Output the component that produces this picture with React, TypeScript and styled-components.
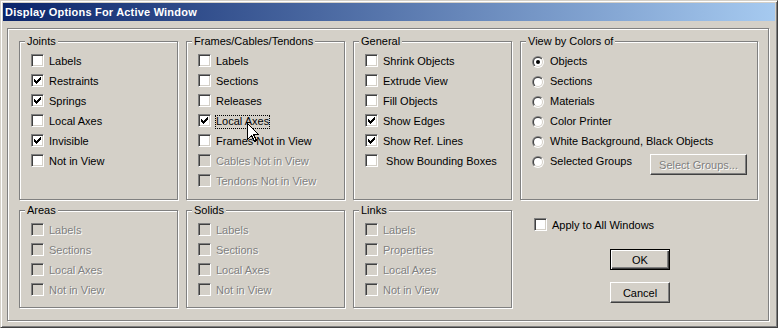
import React, { useId } from "react";
import styled, { createGlobalStyle, css } from "styled-components";

const Global = createGlobalStyle`
  html, body { margin: 0; padding: 0; background: #D4D0C8; }
  body { font-family: "Liberation Sans", Arial, sans-serif; font-size: 11px; color: #000; }
`;

const Window = styled.div`
  position: relative;
  box-sizing: border-box;
  width: 778px;
  height: 328px;
  background: #d4d0c8;
  border: 1px solid;
  border-color: #d4d0c8 #404040 #404040 #d4d0c8;
  box-shadow: inset 1px 1px 0 #fff, inset -1px -1px 0 #808080;
  padding: 2px;
  display: flex;
  flex-direction: column;
  overflow: hidden;
`;

const TitleBar = styled.div`
  flex: none;
  height: 18px;
  background: linear-gradient(to right, #0a246a, #a6caf0);
  color: #fff;
  font-weight: bold;
  font-size: 11px;
  letter-spacing: 0.2px;
  line-height: 18px;
  padding-left: 2px;
  white-space: nowrap;
`;

const OuterFrame = styled.div`
  box-sizing: border-box;
  margin: 7px 0 0 4px;
  width: 762px;
  height: 293px;
  border: 1px solid #808080;
  box-shadow: inset 1px 1px 0 #fff, 1px 1px 0 #fff;
  padding: 12px 0 0 11px;
  display: flex;
  gap: 8px;
`;

const GroupGrid = styled.div`
  display: grid;
  grid-template-columns: repeat(3, 159px);
  grid-template-rows: 159px 98px;
  column-gap: 8px;
  row-gap: 10px;
`;

const RightColumn = styled.div`
  width: 238px;
  display: flex;
  flex-direction: column;
  align-items: flex-start;
`;

const GroupBox = styled.div<{ $height?: number }>`
  position: relative;
  box-sizing: border-box;
  border: 1px solid #808080;
  box-shadow: inset 1px 1px 0 #fff, 1px 1px 0 #fff;
  padding: 9px 10px 0 11px;
  display: flex;
  flex-direction: column;
  ${(p) =>
    p.$height &&
    css`
      height: ${p.$height}px;
      width: 100%;
    `}
`;

const Legend = styled.span`
  position: absolute;
  top: -7px;
  left: 5px;
  padding: 0 2px;
  background: #d4d0c8;
  line-height: 13px;
  white-space: nowrap;
`;

const Row = styled.div`
  flex: none;
  height: 20px;
  display: flex;
  align-items: flex-start;
`;

const ApplyRow = styled(Row)`
  margin: 15px 0 0 14px;
`;

const CheckSquare = styled.span<{ $disabled?: boolean }>`
  display: block;
  flex: none;
  box-sizing: border-box;
  width: 13px;
  height: 13px;
  margin-top: 3px;
  border: 1px solid;
  border-color: #808080 #fff #fff #808080;
  box-shadow: inset 1px 1px 0 #404040, inset -1px -1px 0 #d4d0c8;
  background: ${(p) => (p.$disabled ? "#d4d0c8" : "#fff")};
`;

const CheckGlyph = styled.svg`
  display: block;
  margin: 2px;
`;

const RadioGlyph = styled.svg`
  display: block;
  flex: none;
  margin-top: 5px;
`;

const Label = styled.span<{ $disabled?: boolean; $focused?: boolean; $gap: number }>`
  margin: 4px 0 0 ${(p) => p.$gap}px;
  line-height: 11px;
  padding-bottom: 1px;
  border: 1px ${(p) => (p.$focused ? "dotted #000" : "solid transparent")};
  white-space: pre;
  color: ${(p) => (p.$disabled ? "#808080" : "#000")};
  text-shadow: ${(p) => (p.$disabled ? "1px 1px 0 #fff" : "none")};
`;

const PushButton = styled.button<{ $default?: boolean; $w: number; $disabled?: boolean }>`
  box-sizing: border-box;
  flex: none;
  width: ${(p) => p.$w}px;
  height: 21px;
  padding: 0;
  background: #d4d0c8;
  font-family: "Liberation Sans", Arial, sans-serif;
  font-size: 11px;
  line-height: 12px;
  color: ${(p) => (p.$disabled ? "#808080" : "#000")};
  text-shadow: ${(p) => (p.$disabled ? "1px 1px 0 #fff" : "none")};
  border: 1px solid;
  ${(p) =>
    p.$default
      ? css`
          border-color: #000;
          box-shadow: inset 1px 1px 0 #fff, inset -1px -1px 0 #404040, inset -2px -2px 0 #808080;
        `
      : css`
          border-color: #fff #404040 #404040 #fff;
          box-shadow: inset -1px -1px 0 #808080;
        `}
`;

const SelectButton = styled(PushButton)`
  margin: 3px 0 0 auto;
`;

const OkButton = styled(PushButton)`
  margin: 14px 0 0 90px;
`;

const CancelButton = styled(PushButton)`
  margin: 12px 0 0 90px;
`;

const Cursor = styled.svg`
  position: absolute;
  left: 246px;
  top: 122px;
  pointer-events: none;
`;

const CHECK: [number, number, number][] = [
  [0, 6, 1],
  [1, 5, 2],
  [2, 0, 1],
  [2, 4, 3],
  [3, 0, 2],
  [3, 3, 3],
  [4, 0, 5],
  [5, 1, 3],
  [6, 2, 1],
];

type Item = { label: string; checked?: boolean; disabled?: boolean; focused?: boolean };

function CheckRow({ label, checked, disabled, focused }: Item) {
  return (
    <Row>
      <CheckSquare $disabled={disabled}>
        {checked && (
          <CheckGlyph width={7} height={7} viewBox="0 0 7 7" shapeRendering="crispEdges">
            {CHECK.map(([y, x, w], i) => (
              <rect key={i} x={x} y={y} width={w} height={1} fill={disabled ? "#808080" : "#000"} />
            ))}
          </CheckGlyph>
        )}
      </CheckSquare>
      <Label $gap={4} $disabled={disabled} $focused={focused}>
        {label}
      </Label>
    </Row>
  );
}

function Radio({ checked }: { checked?: boolean }) {
  const id = useId().replace(/[^a-zA-Z0-9]/g, "");
  return (
    <RadioGlyph width={12} height={12} viewBox="0 0 12 12">
      <defs>
        <linearGradient id={`o${id}`} x1="0" y1="0" x2="1" y2="1">
          <stop offset="0.5" stopColor="#808080" />
          <stop offset="0.5" stopColor="#ffffff" />
        </linearGradient>
        <linearGradient id={`i${id}`} x1="0" y1="0" x2="1" y2="1">
          <stop offset="0.5" stopColor="#404040" />
          <stop offset="0.5" stopColor="#d4d0c8" />
        </linearGradient>
      </defs>
      <circle cx={6} cy={6} r={6} fill={`url(#o${id})`} />
      <circle cx={6} cy={6} r={5} fill={`url(#i${id})`} />
      <circle cx={6} cy={6} r={4} fill="#fff" />
      {checked && <circle cx={6} cy={6} r={2} fill="#000" />}
    </RadioGlyph>
  );
}

function RadioRow({ label, checked, children }: { label: string; checked?: boolean; children?: React.ReactNode }) {
  return (
    <Row>
      <Radio checked={checked} />
      <Label $gap={5}>{label}</Label>
      {children}
    </Row>
  );
}

function Group({ title, items, height }: { title: string; items: Item[]; height?: number }) {
  return (
    <GroupBox $height={height}>
      <Legend>{title}</Legend>
      {items.map((it) => (
        <CheckRow key={it.label} {...it} />
      ))}
    </GroupBox>
  );
}

const joints: Item[] = [
  { label: "Labels" },
  { label: "Restraints", checked: true },
  { label: "Springs", checked: true },
  { label: "Local Axes" },
  { label: "Invisible", checked: true },
  { label: "Not in View" },
];

const frames: Item[] = [
  { label: "Labels" },
  { label: "Sections" },
  { label: "Releases" },
  { label: "Local Axes", checked: true, focused: true },
  { label: "Frames Not in View" },
  { label: "Cables Not in View", disabled: true },
  { label: "Tendons Not in View", disabled: true },
];

const general: Item[] = [
  { label: "Shrink Objects" },
  { label: "Extrude View" },
  { label: "Fill Objects" },
  { label: "Show Edges", checked: true },
  { label: "Show Ref. Lines", checked: true },
  { label: " Show Bounding Boxes" },
];

const dis = (labels: string[]): Item[] => labels.map((label) => ({ label, disabled: true }));

export default function App() {
  return (
    <>
      <Global />
      <Window>
        <TitleBar>Display Options For Active Window</TitleBar>
        <OuterFrame>
          <GroupGrid>
            <Group title="Joints" items={joints} />
            <Group title="Frames/Cables/Tendons" items={frames} />
            <Group title="General" items={general} />
            <Group title="Areas" items={dis(["Labels", "Sections", "Local Axes", "Not in View"])} />
            <Group title="Solids" items={dis(["Labels", "Sections", "Local Axes", "Not in View"])} />
            <Group title="Links" items={dis(["Labels", "Properties", "Local Axes", "Not in View"])} />
          </GroupGrid>
          <RightColumn>
            <GroupBox $height={159}>
              <Legend>View by Colors of</Legend>
              <RadioRow label="Objects" checked />
              <RadioRow label="Sections" />
              <RadioRow label="Materials" />
              <RadioRow label="Color Printer" />
              <RadioRow label="White Background, Black Objects" />
              <RadioRow label="Selected Groups">
                <SelectButton $w={97} $disabled disabled>
                  Select Groups...
                </SelectButton>
              </RadioRow>
            </GroupBox>
            <ApplyRow>
              <CheckSquare />
              <Label $gap={4}>Apply to All Windows</Label>
            </ApplyRow>
            <OkButton $w={60} $default>
              OK
            </OkButton>
            <CancelButton $w={60}>Cancel</CancelButton>
          </RightColumn>
        </OuterFrame>
        <Cursor width={13} height={20} viewBox="0 0 13 20" shapeRendering="crispEdges">
          <path d="M0.5 0.5 V16.5 L4.5 12.5 L7.5 18.5 L9.5 17.5 L6.5 11.5 H11.5 Z" fill="#fff" stroke="#000" strokeWidth={1} />
        </Cursor>
      </Window>
    </>
  );
}
